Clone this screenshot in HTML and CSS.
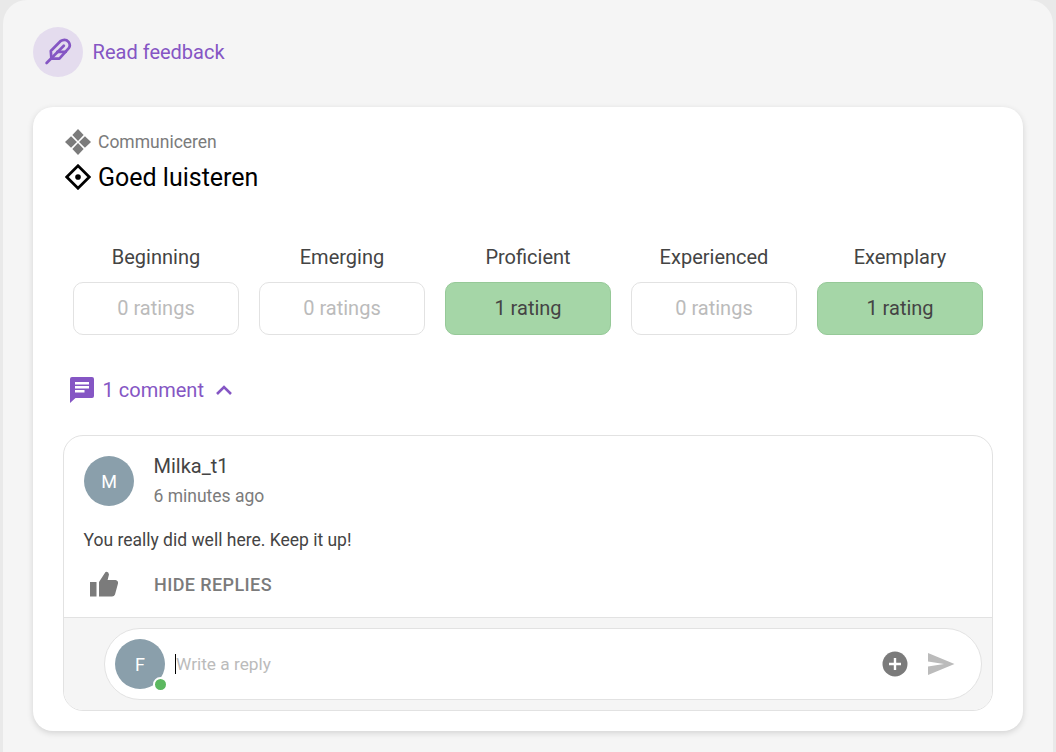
FILE: index.html
```html
<!DOCTYPE html>
<html lang="en">
<head>
<meta charset="utf-8">
<title>Read feedback</title>
<link rel="stylesheet" href="styles.css">
</head>
<body>
<main class="panel">
  <header class="head">
    <span class="head-icon">
      <svg width="28" height="28" viewBox="0 0 28 28" fill="none" stroke="#8556c4" stroke-width="2.7" stroke-linejoin="round" stroke-linecap="round">
        <path d="M7.4 20.6 L6.8 13 L16.4 3.2 Q19.6 1 22.6 2.2 L24.6 4 Q26.8 7 25 9.8 L15.4 20.6 Z"/>
        <path d="M2.6 25 L19.8 7.8"/>
        <path d="M13.4 13.8 H21.8"/>
      </svg>
    </span>
    <span class="head-title">Read feedback</span>
  </header>

  <section class="card">
    <div class="crumb">
      <svg class="crumb-icon" width="26" height="26" viewBox="1 1 24 24" fill="#7b7b7b">
        <path d="M13 1 L18.2 6.6 L13 12 L7.8 6.6 Z"/>
        <path d="M13 14 L18.2 19.4 L13 25 L7.8 19.4 Z"/>
        <path d="M6.6 7.8 L12 13 L6.6 18.2 L1 13 Z"/>
        <path d="M19.4 7.8 L25 13 L19.4 18.2 L14 13 Z"/>
      </svg>
      <span>Communiceren</span>
    </div>
    <h1 class="skill">
      <svg width="26" height="26" viewBox="1 1 24 24" fill="none" stroke="#000" stroke-width="2.5">
        <path d="M13 2.6 L23.4 13 L13 23.4 L2.6 13 Z" stroke-linejoin="miter"/>
        <circle cx="13" cy="13" r="2.6" fill="#000" stroke="none"/>
      </svg>
      <span>Goed luisteren</span>
    </h1>

    <div class="ratings">
      <div class="rating"><div class="rating-label">Beginning</div><div class="rating-box">0 ratings</div></div>
      <div class="rating"><div class="rating-label">Emerging</div><div class="rating-box">0 ratings</div></div>
      <div class="rating"><div class="rating-label">Proficient</div><div class="rating-box is-rated">1 rating</div></div>
      <div class="rating"><div class="rating-label">Experienced</div><div class="rating-box">0 ratings</div></div>
      <div class="rating"><div class="rating-label">Exemplary</div><div class="rating-box is-rated">1 rating</div></div>
    </div>

    <div class="comments-toggle">
      <svg width="26" height="28" viewBox="0 0 26 28" fill="#8556c4">
        <path d="M3 1 H23 Q25 1 25 3 V20 Q25 22 23 22 H6.5 L1 27 V3 Q1 1 3 1 Z"/>
        <path d="M6 6 H20 V8.4 H6 Z M6 10 H20 V12.4 H6 Z M6 14 H15.5 V16.4 H6 Z" fill="#fff"/>
      </svg>
      <span>1 comment</span>
      <svg class="chev" width="18" height="12" viewBox="0 0 18 12" fill="none" stroke="#8556c4" stroke-width="2.6">
        <path d="M2 10 L9 3 L16 10"/>
      </svg>
    </div>

    <article class="comment">
      <div class="comment-body">
        <div class="author">
          <span class="avatar">M</span>
          <div class="author-text">
            <div class="author-name">Milka_t1</div>
            <div class="author-time">6 minutes ago</div>
          </div>
        </div>
        <p class="comment-text">You really did well here. Keep it up!</p>
        <div class="actions">
          <svg class="thumb" width="30" height="26" viewBox="0 0 30 26" fill="#7b7b7b">
            <path d="M1 11 H7.5 V25.5 H1 Z"/>
            <path d="M10 11 L16.5 1 Q19.5 0 20 3.5 L18.6 9 H26.5 Q29.5 9.5 29 12.5 L26 23.5 Q25.3 25.5 23 25.5 H10 Z"/>
          </svg>
          <span class="hide-replies">HIDE REPLIES</span>
        </div>
      </div>
      <div class="reply-area">
        <div class="reply">
          <span class="avatar avatar-me">F<i class="online"></i></span>
          <span class="caret"></span>
          <span class="placeholder">Write a reply</span>
          <svg class="plus" width="26" height="26" viewBox="0 0 26 26">
            <circle cx="13" cy="13" r="12.5" fill="#7b7b7b"/>
            <path d="M13 7 V19 M7 13 H19" stroke="#fff" stroke-width="2.4"/>
          </svg>
          <svg class="send" width="28" height="24" viewBox="0 0 28 24" fill="#bbb">
            <path d="M1 1 L27.5 12 L1 23 V14.5 L17 12 L1 9.5 Z"/>
          </svg>
        </div>
      </div>
    </article>
  </section>
</main>
</body>
</html>
```
FILE: styles.css
```css
* { box-sizing: border-box; }
html, body { margin: 0; height: 100%; }
body {
  background: #e9e9e9;
  font-family: Roboto, "Liberation Sans", sans-serif;
  overflow: hidden;
  padding: 0 3px;
}
.panel {
  background: #f5f5f5;
  border-radius: 24px 24px 0 0;
  height: 752px;
  padding: 27px 30px 0;
}
.head { display: flex; align-items: center; gap: 10px; height: 50px; }
.head-icon {
  width: 50px; height: 50px; border-radius: 50%;
  background: #e4dcee;
  display: flex; align-items: center; justify-content: center;
}
.head-title { font-size: 20px; color: #8556c4; margin-left: -0.4px; }
.card {
  margin-top: 30px;
  height: 624px;
  background: #fff;
  border-radius: 20px;
  box-shadow: 0 2px 6px rgba(0,0,0,.14);
  padding: 22px 30px 20px;
}
.crumb { display: flex; align-items: center; gap: 7px; height: 26px; font-size: 17.5px; color: #7b7b7b; padding-left: 2px; }
.skill { display: flex; align-items: center; gap: 7px; margin: 9px 0 0 0; height: 26px; font-size: 25px; font-weight: 400; color: #000; padding-left: 2px; }
.ratings { display: flex; gap: 20px; padding: 0 10px; margin-top: 55px; }
.rating { width: 166px; }
.rating-label { text-align: center; font-size: 20px; line-height: 24px; color: #444; margin-bottom: 13px; }
.rating-box {
  height: 53px; border: 1px solid #e2e2e2; border-radius: 10px;
  display: flex; align-items: center; justify-content: center;
  font-size: 20px; line-height: 22px; color: #bbb; padding-bottom: 2px;
}
.rating-box.is-rated { background: #a5d6a7; border-color: #96c998; color: #444; }
.comments-toggle { display: flex; align-items: center; height: 28px; margin-top: 41px; padding-left: 6px; font-size: 20px; color: #8556c4; gap: 7.6px; }
.chev { margin-left: 3.4px; }
.comment { margin-top: 31px; height: 276px; border: 1px solid #e2e2e2; border-radius: 20px; overflow: hidden; display: flex; flex-direction: column; }
.comment-body { flex: 1; padding: 20px 20px 0; }
.author { display: flex; gap: 20px; height: 50px; }
.avatar {
  position: relative; flex: none; width: 50px; height: 50px; border-radius: 50%;
  background: #8a9fab; color: #fff; font-size: 18px;
  display: flex; align-items: center; justify-content: center;
}
.author-name { font-size: 20px; line-height: 22px; color: #444; }
.author-text { margin-top: -1px; margin-left: -0.5px; }
.author-time { font-size: 17.5px; line-height: 22px; color: #7b7b7b; margin-top: 8px; }
.comment-text { margin: 22px 0 0 -0.5px; font-size: 17.5px; line-height: 24px; color: #444; }
.actions { display: flex; align-items: center; margin-top: 19px; padding-left: 5px; }
.hide-replies { margin-left: 35px; font-size: 18px; font-weight: 500; color: #7b7b7b; letter-spacing: .4px; }
.reply-area { height: 93px; background: #f5f5f5; border-top: 1px solid #e2e2e2; padding: 10px 10px 0 40px; }
.reply {
  height: 72px; background: #fff; border: 1px solid #e2e2e2; border-radius: 36px;
  display: flex; align-items: center; padding: 0 26px 0 10px;
}
.online { position: absolute; right: -3px; bottom: -3px; border-radius: 50%; background: #5cb860; border: 2px solid #fff; box-sizing: content-box; width: 11px; height: 11px; }
.caret { width: 1px; height: 20px; background: #000; margin-left: 10px; }
.placeholder { flex: 1; font-size: 17.3px; line-height: 20px; padding-bottom: 1px; color: #bbb; }
.send { margin-left: 19px; }
```
